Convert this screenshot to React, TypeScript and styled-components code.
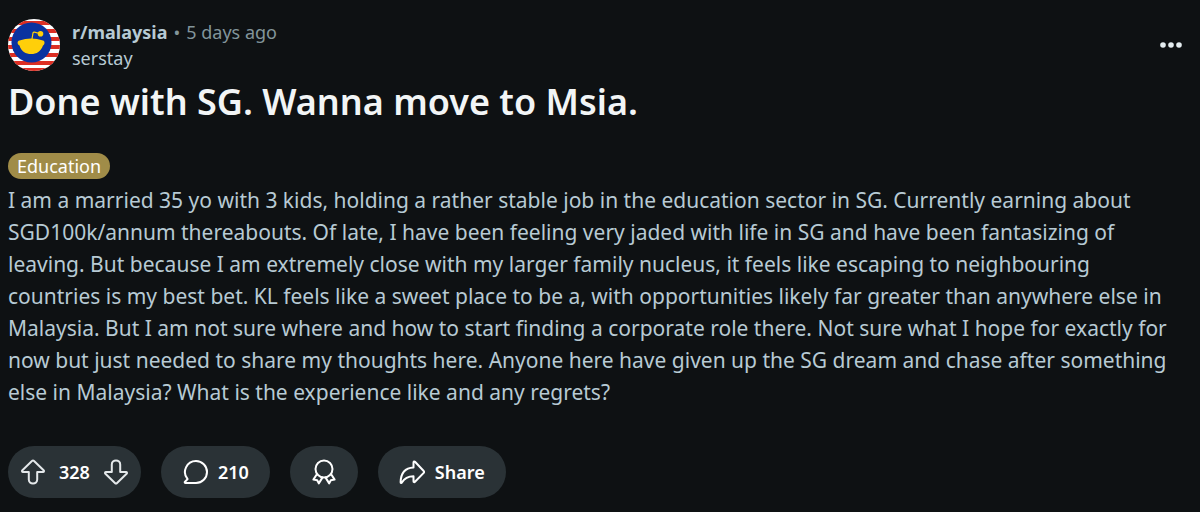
import React from "react";
import styled, { createGlobalStyle } from "styled-components";

const GlobalStyle = createGlobalStyle`
  *, *::before, *::after { box-sizing: border-box; }
  body {
    margin: 0;
    background: #0e1113;
    color: #b7cad4;
    font-family: "Segoe UI", "Noto Sans", "Open Sans", sans-serif;
  }
`;

const Post = styled.article`
  padding: 19px 8px 14px;
`;

const Header = styled.header`
  display: flex;
  align-items: center;
  gap: 12px;
  height: 52px;
`;

const AvatarLink = styled.a`
  display: block;
  width: 52px;
  height: 52px;
`;

const Credit = styled.div`
  flex: 1;
  font-size: 18px;
  line-height: 26px;
`;

const CreditLine = styled.div`
  display: flex;
  gap: 6px;
  color: #82959b;
`;

const Community = styled.a`
  color: #b7cad4;
  font-weight: 700;
  text-decoration: none;
`;

const Author = styled.a`
  color: #b7cad4;
  text-decoration: none;
`;

const MenuButton = styled.button`
  display: flex;
  align-items: center;
  justify-content: center;
  width: 42px;
  height: 42px;
  padding: 0;
  border: 0;
  border-radius: 21px;
  background: transparent;
  color: #e4ecef;
  cursor: pointer;
`;

const Title = styled.h1`
  margin: 6px 0 0;
  color: #f2f5f6;
  font-size: 36px;
  line-height: 50px;
  font-weight: 600;
`;

const Flair = styled.a`
  display: block;
  width: fit-content;
  margin-top: 26px;
  padding: 0 9px;
  border-radius: 13px;
  background: #a08c48;
  color: #ffffff;
  font-size: 18px;
  line-height: 26px;
  text-decoration: none;
`;

const Body = styled.p`
  margin: 5px 0 0;
  padding-right: 8px;
  font-size: 21px;
  line-height: 32px;
`;

const Actions = styled.footer`
  display: flex;
  gap: 20px;
  margin-top: 38px;
`;

const pill = `
  display: flex;
  align-items: center;
  height: 52px;
  border: 0;
  border-radius: 26px;
  background: #2a3236;
  color: #ffffff;
  font-family: inherit;
  font-size: 18px;
  font-weight: 600;
`;

const VoteGroup = styled.div`
  ${pill}
  gap: 13px;
  padding: 0 12px;
`;

const VoteButton = styled.button`
  display: flex;
  padding: 0;
  border: 0;
  background: transparent;
  color: #e4e8ea;
  cursor: pointer;
`;

const ActionButton = styled.button`
  ${pill}
  gap: 10px;
  padding: 0 21px;
  cursor: pointer;
`;

const Icon = styled.svg`
  display: block;
  flex: none;
  width: 26px;
  height: 26px;
  fill: none;
  stroke: currentColor;
  stroke-width: 2;
  stroke-linejoin: round;
  stroke-linecap: round;
`;

const ARROW =
  "M12.2 1.800 2.400 11.200C1.600 12 2 13 3 13H8.800V20.600a4.200 4 0 0 0 8.400 0V13h5.800c1 0 1.400-1 .6-1.800L13.800 1.800a1.100 1.100 0 0 0-1.600 0Z";

function Avatar() {
  return (
    <svg width="52" height="52" viewBox="0 0 52 52" role="img" aria-label="r/malaysia">
      <defs>
        <clipPath id="disc">
          <circle cx="26" cy="26" r="26" />
        </clipPath>
      </defs>
      <g clipPath="url(#disc)">
        <rect width="52" height="52" fill="#ffffff" />
        {[3, 11, 19, 27, 35, 43, 50].map((y) => (
          <rect key={y} y={y - 1} width="52" height="4" fill="#dc2f24" />
        ))}
        <circle cx="23.500" cy="23.500" r="20" fill="#0a32a0" />
        <g fill="#ffcf0a">
          <path d="M11.500 21.500Q23 17.500 35 21.500C37 22 37 25.500 35 26.500C33 32.500 28.500 35 23.200 35S13 32.500 11.500 26.500C9 25.500 9 22 11.500 21.500Z" />
          <circle cx="32.500" cy="14.800" r="2.800" />
        </g>
        <path d="M24 20l1-6q.3-1 1.500-.8l5 1.300" fill="none" stroke="#ffcf0a" strokeWidth="1.200" />
      </g>
    </svg>
  );
}

export default function App() {
  return (
    <>
      <GlobalStyle />
      <Post>
        <Header>
          <AvatarLink href="#community" aria-label="r/malaysia">
            <Avatar />
          </AvatarLink>
          <Credit>
            <CreditLine>
              <Community href="#community">r/malaysia</Community>
              <span>•</span>
              <time>5 days ago</time>
            </CreditLine>
            <Author href="#author">serstay</Author>
          </Credit>
          <MenuButton aria-label="More options">
            <svg width="22" height="6" viewBox="0 0 22 6" fill="currentColor">
              <circle cx="3" cy="3" r="2.800" />
              <circle cx="11" cy="3" r="2.800" />
              <circle cx="19" cy="3" r="2.800" />
            </svg>
          </MenuButton>
        </Header>
        <Title>Done with SG. Wanna move to Msia.</Title>
        <Flair href="#education">Education</Flair>
        <Body>
          I am a married 35 yo with 3 kids, holding a rather stable job in the education sector in SG.
          Currently earning about SGD100k/annum thereabouts. Of late, I have been feeling very jaded with
          life in SG and have been fantasizing of leaving. But because I am extremely close with my larger
          family nucleus, it feels like escaping to neighbouring countries is my best bet. KL feels like a
          sweet place to be a, with opportunities likely far greater than anywhere else in Malaysia. But I
          am not sure where and how to start finding a corporate role there. Not sure what I hope for
          exactly for now but just needed to share my thoughts here. Anyone here have given up the SG dream
          and chase after something else in Malaysia? What is the experience like and any regrets?
        </Body>
        <Actions>
          <VoteGroup>
            <VoteButton aria-label="Upvote">
              <Icon viewBox="0 0 26 26">
                <path d={ARROW} />
              </Icon>
            </VoteButton>
            <span>328</span>
            <VoteButton aria-label="Downvote">
              <Icon viewBox="0 0 26 26">
                <path d={ARROW} transform="rotate(180 13 13)" />
              </Icon>
            </VoteButton>
          </VoteGroup>
          <ActionButton>
            <Icon viewBox="0 0 26 26">
              <path d="M14 2a11 11 0 1 1 0 22H3.500c-.7 0-1-.8-.5-1.300l2.600-2.600A11 11 0 0 1 14 2Z" />
            </Icon>
            <span>210</span>
          </ActionButton>
          <ActionButton aria-label="Give award">
            <Icon viewBox="0 0 26 26">
              <circle cx="13" cy="10" r="8.500" />
              <path d="M5.500 15.800 2.400 20.600l3.800.6 1.600 3.200 3.600-5.800M20.500 15.800l3.100 4.800-3.800.6-1.600 3.200-3.600-5.800" />
            </Icon>
          </ActionButton>
          <ActionButton>
            <Icon viewBox="0 0 26 26">
              <path d="M14.500 3.400v5C6.500 8.800 1.800 14 1.600 23.200c0 .9.900 1 1.300.3C5.500 19 9 17.200 14.500 17.200v5c0 .9.900 1.200 1.500.6l8.700-8.900c.6-.6.600-1.300 0-1.900L16 2.800c-.6-.6-1.500-.3-1.500.6Z" />
            </Icon>
            <span>Share</span>
          </ActionButton>
        </Actions>
      </Post>
    </>
  );
}
